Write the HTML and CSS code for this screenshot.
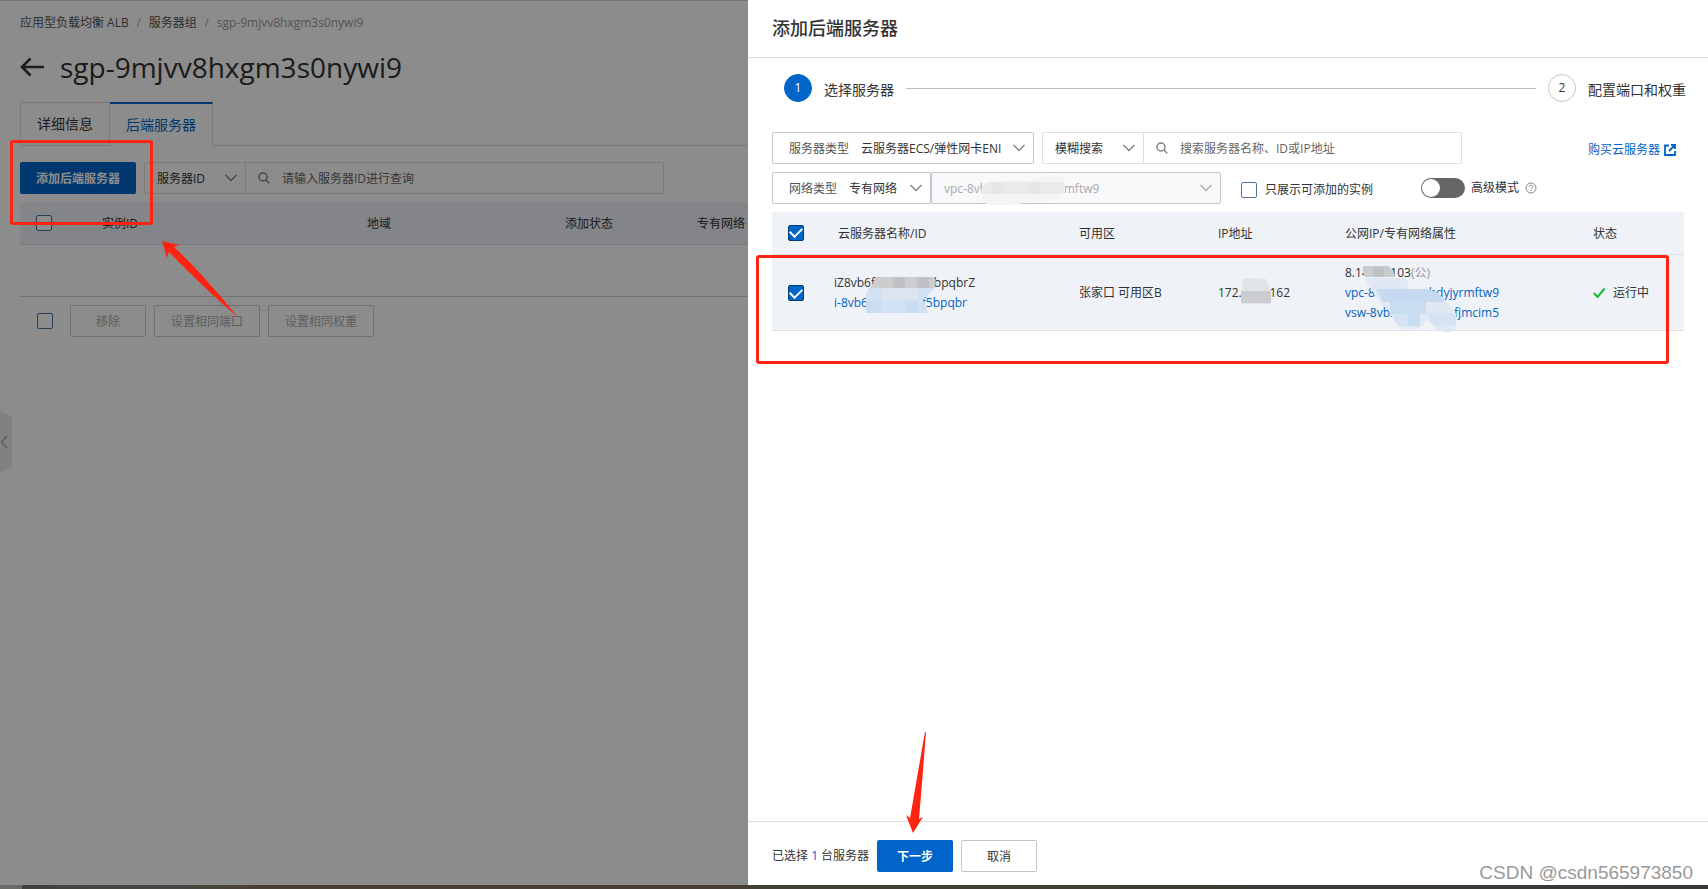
FILE: index.html
```html
<!DOCTYPE html>
<html lang="zh-CN">
<head>
<meta charset="utf-8">
<title>服务器组 - 应用型负载均衡 ALB</title>
<link rel="stylesheet" href="styles.css">
</head>
<body>
<div class="screen">
  <main class="console">
    <nav class="breadcrumb" aria-label="面包屑">
      <a href="#">应用型负载均衡 ALB</a><span class="slash">/</span><a href="#">服务器组</a><span class="slash">/</span><span class="current">sgp-9mjvv8hxgm3s0nywi9</span>
    </nav>
    <header class="page-title">
      <button class="back" type="button" aria-label="返回">
        <svg width="24" height="20" viewBox="0 0 24 20"><path d="M10.500 1.500 2 10l8.500 8.500M2 10h22" fill="none" stroke="currentColor" stroke-width="2.600"/></svg>
      </button>
      <h1>sgp-9mjvv8hxgm3s0nywi9</h1>
    </header>
    <div class="tabs" role="tablist">
      <button class="tab" type="button" role="tab">详细信息</button>
      <button class="tab tab-active" type="button" role="tab" aria-selected="true">后端服务器</button>
      <span class="tab-rest"></span>
    </div>
    <div class="toolbar">
      <button class="btn btn-primary" type="button">添加后端服务器</button>
      <div class="combo combo-main">
        <div class="combo-select">
          <select aria-label="查询字段"><option>服务器ID</option></select>
          <svg class="chevron" width="12" height="8" viewBox="0 0 12 8"><path d="M.5 1 6 6.500 11.500 1"/></svg>
        </div>
        <div class="combo-search">
          <svg class="lens" width="12" height="12" viewBox="0 0 12 12"><circle cx="5" cy="5" r="4"/><path d="m8 8 3.200 3.200"/></svg>
          <input type="text" aria-label="服务器ID" placeholder="请输入服务器ID进行查询">
        </div>
      </div>
    </div>
    <table class="grid grid-main">
      <colgroup><col class="m-check"><col class="m-id"><col class="m-region"><col class="m-state"><col></colgroup>
      <thead><tr>
        <th><input class="check" type="checkbox" aria-label="全选"></th><th>实例ID</th><th>地域</th><th>添加状态</th><th>专有网络</th>
      </tr></thead>
      <tbody><tr><td colspan="5"></td></tr></tbody>
    </table>
    <div class="batch">
      <input class="check" type="checkbox" aria-label="全选本页">
      <button class="btn btn-off" type="button" disabled>移除</button>
      <button class="btn btn-off" type="button" disabled>设置相同端口</button>
      <button class="btn btn-off" type="button" disabled>设置相同权重</button>
    </div>
  </main>
  <button class="handle" type="button" aria-label="展开导航">
    <svg width="12" height="62" viewBox="0 0 12 62"><path d="M0 0 12 6v50L0 62z" fill="#ececec"/><path d="M7 25 1.500 31 7 37" fill="none" stroke="#a8a8a8" stroke-width="1.500"/></svg>
  </button>
  <div class="shade"></div>

  <aside class="drawer" aria-label="添加后端服务器">
    <header class="drawer-head"><h2>添加后端服务器</h2></header>
    <section class="drawer-body">
      <ol class="steps">
        <li class="step"><span class="dot dot-on">1</span><span class="step-name">选择服务器</span></li>
        <li class="step-line" aria-hidden="true"></li>
        <li class="step"><span class="dot">2</span><span class="step-name">配置端口和权重</span></li>
      </ol>
      <div class="filters">
        <label class="field field-type"><span>服务器类型</span>
          <select><option>云服务器ECS/弹性网卡ENI</option></select>
          <svg class="chevron" width="12" height="8" viewBox="0 0 12 8"><path d="M.5 1 6 6.500 11.500 1"/></svg>
        </label>
        <div class="combo combo-drawer">
          <div class="combo-select">
            <select aria-label="搜索方式"><option>模糊搜索</option></select>
            <svg class="chevron" width="12" height="8" viewBox="0 0 12 8"><path d="M.5 1 6 6.500 11.500 1"/></svg>
          </div>
          <div class="combo-search">
            <svg class="lens" width="12" height="12" viewBox="0 0 12 12"><circle cx="5" cy="5" r="4"/><path d="m8 8 3.200 3.200"/></svg>
            <input type="text" aria-label="搜索服务器" placeholder="搜索服务器名称、ID或IP地址">
          </div>
        </div>
        <a class="buy" href="#">购买云服务器
          <svg width="12" height="12" viewBox="0 0 12 12"><path d="M5 1.500H1v9.500h10V7M7 1h4v4M11 1 5 7" fill="none" stroke="currentColor" stroke-width="1.800"/></svg>
        </a>
      </div>
      <div class="filters">
        <div class="network">
          <label class="field field-net"><span>网络类型</span>
            <select><option>专有网络</option></select>
            <svg class="chevron" width="12" height="8" viewBox="0 0 12 8"><path d="M.5 1 6 6.500 11.500 1"/></svg>
          </label>
          <div class="field field-vpc">
            <select aria-label="专有网络实例" disabled><option>vpc-8vb&nbsp;&nbsp;&nbsp;&nbsp;&nbsp;&nbsp;&nbsp;&nbsp;&nbsp;&nbsp;&nbsp;&nbsp;&nbsp;&nbsp;&nbsp;&nbsp;&nbsp;&nbsp;&nbsp;&nbsp;&nbsp;&nbsp;&nbsp;rmftw9</option></select>
            <svg class="chevron" width="12" height="8" viewBox="0 0 12 8"><path d="M.5 1 6 6.500 11.500 1"/></svg>
            <svg class="mask mask-vpc" width="86" height="32" viewBox="0 0 86 32"><path d="M2 11Q5 7 14 7H52Q62 1 74 2Q84 3 85 9V17Q84 26 73 26L45 28Q40 31 28 31H12Q4 30 2 26z" fill="#f3f4f5"/><path d="M1 19Q1 9 12 8H84V18Q83 20 80 20H1z" fill="#ebebec"/><path d="M12 8h12v12H12zM48 8h12v12H48z" fill="#e6e6e7"/></svg>
          </div>
        </div>
        <label class="only"><input class="check" type="checkbox"><span>只展示可添加的实例</span></label>
        <label class="advanced"><input class="switch" type="checkbox" role="switch">高级模式
          <svg width="12" height="12" viewBox="0 0 12 12"><circle cx="6" cy="6" r="5" fill="none" stroke="#888"/><path d="M4.300 4.900a1.700 1.500 0 1 1 2.500 1.200q-.8.400-.8 1.100M6 8v1" fill="none" stroke="#888"/></svg>
        </label>
      </div>
      <table class="grid grid-servers">
        <colgroup><col class="s-check"><col class="s-name"><col class="s-zone"><col class="s-ip"><col><col class="s-state"></colgroup>
        <thead><tr>
          <th><input class="check" type="checkbox" checked aria-label="全选"></th><th class="name">云服务器名称/ID</th><th>可用区</th><th>IP地址</th><th>公网IP/专有网络属性</th><th>状态</th>
        </tr></thead>
        <tbody><tr>
          <td><input class="check" type="checkbox" checked aria-label="选择服务器"></td>
          <td>
            <div class="lines">
              <div class="split w-name"><span>iZ8vb6f</span><span>bpqbrZ</span></div>
              <a class="split w-id" href="#"><span>i-8vb6</span><span>f5bpqbr</span></a>
              <svg class="mask mask-name" width="74" height="38" viewBox="0 0 74 38"><path d="M10 1H68Q71 4 69 12H4Q7 8 10 1z" fill="#cbcdcf"/><path d="M27 1h12v11H27zM51 1h12v11H51z" fill="#bfc1c4"/><path d="M3 12H69Q63 18 57 24L62 37H0V18z" fill="#d3e2f3"/><path d="M16 12h36v12H16z" fill="#dce5ef"/><path d="M0 25h15v12H0zM40 25h12v12H40z" fill="#c9dcf1"/></svg>
            </div>
          </td>
          <td>张家口 可用区B</td>
          <td>
            <div class="lines">
              <div class="split w-ip"><span>172.2</span><span>162</span></div>
              <svg class="mask mask-ip" width="32" height="28" viewBox="0 0 32 28"><path d="M3 2Q14 0 26 2L31 15V27H1z" fill="#e1e4e8"/><path d="M1 14H31V26H1z" fill="#cbcdd0"/></svg>
            </div>
          </td>
          <td>
            <div class="lines">
              <div class="split w-public"><span>8.14</span><span>103<i>(公)</i></span></div>
              <a class="split w-net" href="#"><span>vpc-8v</span><span>hdyjyrmftw9</span></a>
              <a class="split w-net" href="#"><span>vsw-8vbl</span><span>fjmcim5</span></a>
              <svg class="mask mask-net" width="102" height="72" viewBox="0 0 102 72"><path d="M5 13H45Q48 14 48 24H69Q88 32 96 52Q98 64 91 67Q77 69 70 57Q65 53 64 60Q53 67 43 63Q34 58 29 46Q12 30 5 13z" fill="#dfe8f3"/><path d="M3 1H28Q34 5 35 12H5Q2 8 3 1z" fill="#c9cccf"/><path d="M13 2h11v10H13z" fill="#bfc2c5"/><path d="M16 24H69Q80 27 85 37H23z" fill="#c5daf1"/><path d="M30 37h36v12H30zM48 49h12v12H48z" fill="#c9ddf1"/><path d="M31 49h17v12H38zM66 48h30v12H74z" fill="#d5e3f2"/></svg>
            </div>
          </td>
          <td><span class="running"><svg width="14" height="12" viewBox="0 0 14 12"><path d="m.8 6 3.800 4 7-8.500" fill="none" stroke="#1eb83c" stroke-width="2"/></svg>运行中</span></td>
        </tr></tbody>
      </table>
    </section>
    <footer class="drawer-foot">
      <span>已选择 <b>1</b> 台服务器</span>
      <button class="btn btn-primary btn-short" type="button">下一步</button>
      <button class="btn btn-plain btn-short" type="button">取消</button>
    </footer>
  </aside>

  <div class="taskbar"></div>
  <div class="frame frame-add"></div>
  <div class="frame frame-row"></div>
  <svg class="pointer pointer-add" width="76" height="76" viewBox="0 0 76 76"><path d="M0 0 17 4 12 6Q38 30 74 74L73 74Q40 45 7 11L5 17z" fill="#ff2312"/></svg>
  <svg class="pointer pointer-next" width="22" height="101" viewBox="0 0 22 101"><path d="M7 101 0 83 4 86 19 0h1Q17 40 13 87L17 85z" fill="#ff2312"/></svg>
  <div class="watermark">CSDN @csdn565973850</div>
</div>
</body>
</html>
```

FILE: styles.css
```css
* { box-sizing: border-box; }

body {
  margin: 0;
  color: #333;
  background: #fff;
  font: 12px/20px "Open Sans", "Noto Sans CJK SC", sans-serif;
}

button, input, select { font: inherit; color: inherit; }
button { cursor: pointer; }
a { color: #0064c8; text-decoration: none; }
h1, h2 { margin: 0; font-weight: 500; }

.screen {
  position: relative;
  display: flex;
  flex-direction: column;
  height: 100vh;
  overflow: hidden;
}

/* Console page */
.console {
  flex: 1;
  min-height: 0;
  padding: 12px 20px 0;
  border-top: 1px solid #d8d8d8;
}

.breadcrumb { display: flex; height: 20px; }
.breadcrumb a { color: #555; }
.slash { width: 20px; text-align: center; color: #aaa; }
.current { color: #999; }

.page-title { display: flex; align-items: center; gap: 16px; height: 69px; padding-bottom: 2px; }
.page-title h1 { font-size: 28px; line-height: 36px; font-weight: 400; }
.back { display: flex; padding: 0; border: 0; background: none; }

.tabs { display: flex; height: 44px; font-size: 14px; }
.tab {
  padding: 0 16px;
  border: 1px solid #dedede;
  background: #fff;
}
.tab-active {
  border-top: 2px solid #0064c8;
  border-bottom: 0;
  border-left: 0;
  color: #0064c8;
}
.tab-rest { flex: 1; border-bottom: 1px solid #dedede; }

.toolbar { display: flex; gap: 8px; padding: 16px 0 8px; }

.btn {
  height: 32px;
  padding: 2px 15px 0;
  border: 1px solid transparent;
  border-radius: 2px;
  background: #fff;
}
.btn-primary { background: #0064c8; color: #fff; font-weight: 700; }
.btn-plain { border-color: #c0c6cc; }
.btn-off { padding: 2px 16px 0; border-color: #ccc; color: #aaa; }
.btn-short { width: 76px; }

.combo {
  display: flex;
  height: 32px;
  border: 1px solid #dedede;
  border-radius: 2px;
  background: #fff;
}
.combo-main { width: 520px; }
.combo-drawer { width: 420px; }
.combo-select {
  display: flex;
  align-items: center;
  width: 101px;
  padding: 0 8px 0 12px;
  border-right: 1px solid #dedede;
}
.combo-search { display: flex; flex: 1; align-items: center; gap: 12px; padding: 0 12px; }

select, .combo-search input {
  flex: 1;
  min-width: 0;
  padding: 2px 0 0;
  border: 0;
  outline: 0;
  background: none;
  appearance: none;
  opacity: 1;
}
.combo-search input::placeholder { color: #666; opacity: 1; }

.chevron, .lens { flex: none; fill: none; stroke: #808080; stroke-width: 1.3; }
.lens { stroke-width: 1.5; }

.check {
  display: block;
  flex: none;
  width: 16px;
  height: 16px;
  margin: 0;
  border: 1px solid #4c7399;
  border-radius: 2px;
  background: #fff;
  appearance: none;
}
.check:checked {
  display: grid;
  place-items: center;
  padding-bottom: 3px;
  border-color: #003c78;
  background: #0064c8;
}
.check:checked::after {
  content: "";
  width: 10px;
  height: 6px;
  border: solid #fff;
  border-width: 0 0 2px 2px;
  transform: rotate(-45deg);
}

.grid { width: 100%; border-collapse: collapse; table-layout: fixed; }
.grid th, .grid td {
  padding: 0 12px;
  border-bottom: 1px solid #dee1e5;
  text-align: left;
  font-weight: 400;
}
.grid th { height: 42px; padding-top: 2px; background: #eff2f7; }
.grid th:first-child, .grid td:first-child { padding: 0 16px; }
.grid-main td { height: 52px; border-color: #d0d0d0; }
.m-check { width: 70px; }
.m-id { width: 265px; }
.m-region { width: 198px; }
.m-state { width: 132px; }

.batch { display: flex; align-items: center; gap: 8px; padding: 8px 0 0 17px; }
.batch .check { margin-right: 9px; }
.batch .btn:nth-of-type(1) { width: 76px; }

.handle {
  position: absolute;
  top: 411px;
  left: 0;
  padding: 0;
  border: 0;
  background: none;
}
.handle svg { display: block; }

.shade { position: absolute; inset: 0; background: rgba(0, 0, 0, .45); }

/* Drawer */
.drawer {
  position: absolute;
  inset: 0 0 4px auto;
  display: flex;
  flex-direction: column;
  width: 960px;
  background: #fff;
}
.drawer-head { padding: 15px 24px 16px; border-bottom: 1px solid #dedede; }
.drawer-head h2 { font-size: 18px; line-height: 26px; }
.drawer-body { flex: 1; padding: 16px 24px 0; }

.steps {
  display: flex;
  align-items: center;
  gap: 12px;
  margin: 0 -2px 30px 0;
  padding: 0 0 0 12px;
  list-style: none;
  font-size: 14px;
}
.step { display: flex; align-items: center; gap: 12px; }
.step-name { padding-top: 4px; }
.step-line { flex: 1; height: 1px; background: #b9bcc0; }
.dot {
  width: 28px;
  height: 28px;
  border: 1px solid #c0c6cc;
  border-radius: 50%;
  font-size: 12px;
  line-height: 26px;
  text-align: center;
}
.dot-on { border-color: #0064c8; background: #0064c8; color: #fff; }

.filters { display: flex; align-items: center; height: 32px; margin-bottom: 8px; }
.field {
  position: relative;
  display: flex;
  align-items: center;
  gap: 12px;
  height: 32px;
  padding: 0 8px 0 16px;
  border: 1px solid #c0c6cc;
  border-radius: 2px;
}
.field > span { padding-top: 2px; color: #555; }
.field-type { width: 262px; margin-right: 8px; }
.network { display: flex; }
.field-net { width: 159px; }
.field-vpc { width: 290px; padding-left: 12px; background: #f7f9fa; color: #aaa; }
.field-vpc .chevron { stroke: #aaa; }
.buy { display: flex; align-items: center; gap: 4px; margin-left: auto; padding: 4px 8px 0 0; }
.only { display: flex; align-items: center; gap: 8px; margin-left: 20px; }
.only span { padding-top: 4px; }
.only .check { margin-top: 4px; }
.advanced { display: flex; align-items: center; gap: 6px; margin-left: 48px; }

.switch {
  width: 44px;
  height: 20px;
  margin: 0;
  padding: 1px;
  border-radius: 10px;
  background: #666;
  appearance: none;
}
.switch::before {
  content: "";
  display: block;
  width: 18px;
  height: 18px;
  border-radius: 50%;
  background: #fff;
}

.grid-servers td { height: 76px; padding-top: 2px; background: #eff2f7; }
.grid-servers td:first-child { padding-top: 2px; }
.grid-servers .name { padding-left: 16px; }
.s-check { width: 50px; }
.s-name { width: 245px; }
.s-zone { width: 139px; }
.s-ip { width: 127px; }
.s-state { width: 103px; }

.lines { position: relative; display: grid; }
.split { display: flex; justify-content: space-between; white-space: nowrap; }
.split i { font-style: normal; color: #999; }
.w-name { width: 141px; }
.w-id { width: 133px; }
.w-ip { width: 72px; }
.w-public { width: 85px; }
.w-net { width: 154px; }
.mask { position: absolute; }
.mask-vpc { top: 1px; left: 48px; }
.mask-name { top: 3px; left: 32px; }
.mask-ip { top: -6px; left: 22px; }
.mask-net { top: 2px; left: 15px; }
.running { display: flex; align-items: center; gap: 6px; }

.drawer-foot {
  display: flex;
  align-items: center;
  gap: 8px;
  padding: 18px 24px 13px;
  border-top: 1px solid #dedede;
}
.drawer-foot b { font-weight: 400; color: #0064c8; }

.taskbar {
  position: relative;
  flex: none;
  height: 4px;
  background: linear-gradient(90deg, #6b6a64 22px, #41443d 22px, #454843 10%, #4a4035 16%, #4a4038 28%, #423f36 50%, #383835);
}

/* Annotations */
.frame { position: absolute; border: 3px solid #ff2312; border-radius: 3px; }
.frame-add { top: 140px; left: 10px; width: 143px; height: 85px; }
.frame-row { top: 255px; left: 756px; width: 913px; height: 109px; }
.pointer { position: absolute; }
.pointer-add { top: 241px; left: 162px; }
.pointer-next { top: 732px; left: 906px; }
.watermark {
  position: absolute;
  right: 15px;
  bottom: 6px;
  color: #999;
  font: 19px/20px "Liberation Sans", sans-serif;
}
```
